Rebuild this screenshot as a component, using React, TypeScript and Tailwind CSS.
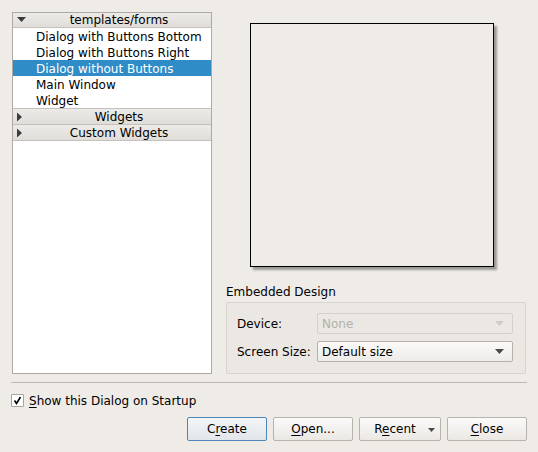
import React from 'react';

const font = { fontFamily: '"DejaVu Sans", "Liberation Sans", sans-serif' };

const Header: React.FC<{ label: string; open?: boolean; className?: string }> = ({ label, open, className }) => (
  <div
    className={`relative flex items-center justify-center pl-[14px] bg-gradient-to-b from-[#ecebe8] to-[#e0ddd9] border-b border-[#c4c0bb] ${className ?? ''}`}
  >
    <span className="absolute left-[4px] top-1/2 -translate-y-1/2">
      {open ? (
        <svg width="9" height="6" viewBox="0 0 9 6">
          <path d="M0 0 L9 0 L4.5 5 Z" fill="#3a3a3a" />
        </svg>
      ) : (
        <svg width="6" height="9" viewBox="0 0 6 9">
          <path d="M0 0 L5 4.5 L0 9 Z" fill="#3a3a3a" />
        </svg>
      )}
    </span>
    <span className="leading-none">{label}</span>
  </div>
);

const Item: React.FC<{ label: string; selected?: boolean }> = ({ label, selected }) => (
  <div
    className={`h-[16px] pl-[23px] pt-px flex items-center leading-none ${selected ? 'bg-[#308cc6] text-white' : 'text-black'}`}
  >
    {label}
  </div>
);

const Combo: React.FC<{ value: string; disabled?: boolean }> = ({ value, disabled }) => (
  <div
    className={`w-[196px] h-[21px] rounded-[2px] border flex items-center justify-between pl-[4px] pr-[8px] ${
      disabled
        ? 'border-[#d4d0cb] bg-[#ebe8e4] text-[#b4b0ab]'
        : 'border-[#b5b0aa] bg-gradient-to-b from-[#fbfaf9] to-[#eeebe8] text-black'
    }`}
  >
    <span className="leading-none">{value}</span>
    <svg width="9" height="5" viewBox="0 0 9 5">
      <path d="M0 0 L9 0 L4.5 5 Z" fill={disabled ? '#cfcbc6' : '#4a4a4a'} />
    </svg>
  </div>
);

const Btn: React.FC<{ children: React.ReactNode; primary?: boolean; w?: string; menu?: boolean }> = ({
  children,
  primary,
  w = 'w-[80px]',
  menu,
}) => (
  <div
    className={`${w} h-[24px] rounded-[2px] border flex items-center justify-center relative ${
      primary
        ? 'border-[#4d86b9] bg-gradient-to-b from-[#f3f5f7] to-[#e2e6ea]'
        : 'border-[#b7b2ac] bg-gradient-to-b from-[#fbfaf9] to-[#ebe8e4]'
    }`}
  >
    <span className={`leading-none ${menu ? '-ml-[10px]' : ''}`}>{children}</span>
    {menu && (
      <svg className="absolute right-[5px] top-[10px]" width="7" height="4" viewBox="0 0 7 4">
        <path d="M0 0 L7 0 L3.5 4 Z" fill="#4a4a4a" />
      </svg>
    )}
  </div>
);

const U: React.FC<{ children: React.ReactNode }> = ({ children }) => (
  <span className="underline underline-offset-[2px]">{children}</span>
);

const App: React.FC = () => {
  return (
    <div className="w-[538px] h-[452px] bg-[#efebe7] text-black text-[12px] flex flex-col" style={font}>
      <div className="flex pt-[12px] pl-[12px]">
        <div className="w-[200px] h-[362px] bg-white border border-[#aea9a4] flex flex-col">
          <Header label="templates/forms" open className="h-[15px]" />
          <Item label="Dialog with Buttons Bottom" />
          <Item label="Dialog with Buttons Right" />
          <Item label="Dialog without Buttons" selected />
          <Item label="Main Window" />
          <Item label="Widget" />
          <Header label="Widgets" className="h-[17px] border-t" />
          <Header label="Custom Widgets" className="h-[16px]" />
        </div>

        <div className="ml-[14px] w-[300px] h-[362px] flex flex-col">
          <div className="pl-[24px] pt-[11px]">
            <div className="w-[244px] h-[244px] bg-[#efebe7] border border-black shadow-[3px_3px_2px_rgba(0,0,0,0.35)]" />
          </div>
          <div className="mt-[17px] h-[16px] flex items-center leading-none">Embedded Design</div>
          <div className="mt-[2px] h-[72px] border border-[#d8d4cf] bg-[#ebe7e3] rounded-[2px] pl-[10px] pr-[12px] pt-[10px] flex flex-col gap-[7px]">
            <div className="flex items-center justify-between">
              <span className="leading-none">Device:</span>
              <Combo value="None" disabled />
            </div>
            <div className="flex items-center justify-between">
              <span className="leading-none">Screen Size:</span>
              <Combo value="Default size" />
            </div>
          </div>
        </div>
      </div>

      <div className="mt-[8px] mx-[11px] h-px bg-[#bcb8b3]" />

      <div className="mt-[11px] ml-[11px] flex items-center gap-[5px] h-[13px]">
        <div className="w-[13px] h-[13px] bg-white border border-[#a7a29d] rounded-[1px] flex items-center justify-center">
          <svg width="9" height="9" viewBox="0 0 9 9">
            <path d="M1.5 4.5 L3.5 7.5 L7.5 1" stroke="#000" strokeWidth="1.6" fill="none" />
          </svg>
        </div>
        <span className="leading-none">
          <U>S</U>how this Dialog on Startup
        </span>
      </div>

      <div className="mt-[10px] pr-[11px] flex justify-end gap-[6px]">
        <Btn primary>
          C<U>r</U>eate
        </Btn>
        <Btn>
          <U>O</U>pen...
        </Btn>
        <Btn w="w-[82px]" menu>
          R<U>e</U>cent
        </Btn>
        <Btn>
          <U>C</U>lose
        </Btn>
      </div>
    </div>
  );
};

export default App;
